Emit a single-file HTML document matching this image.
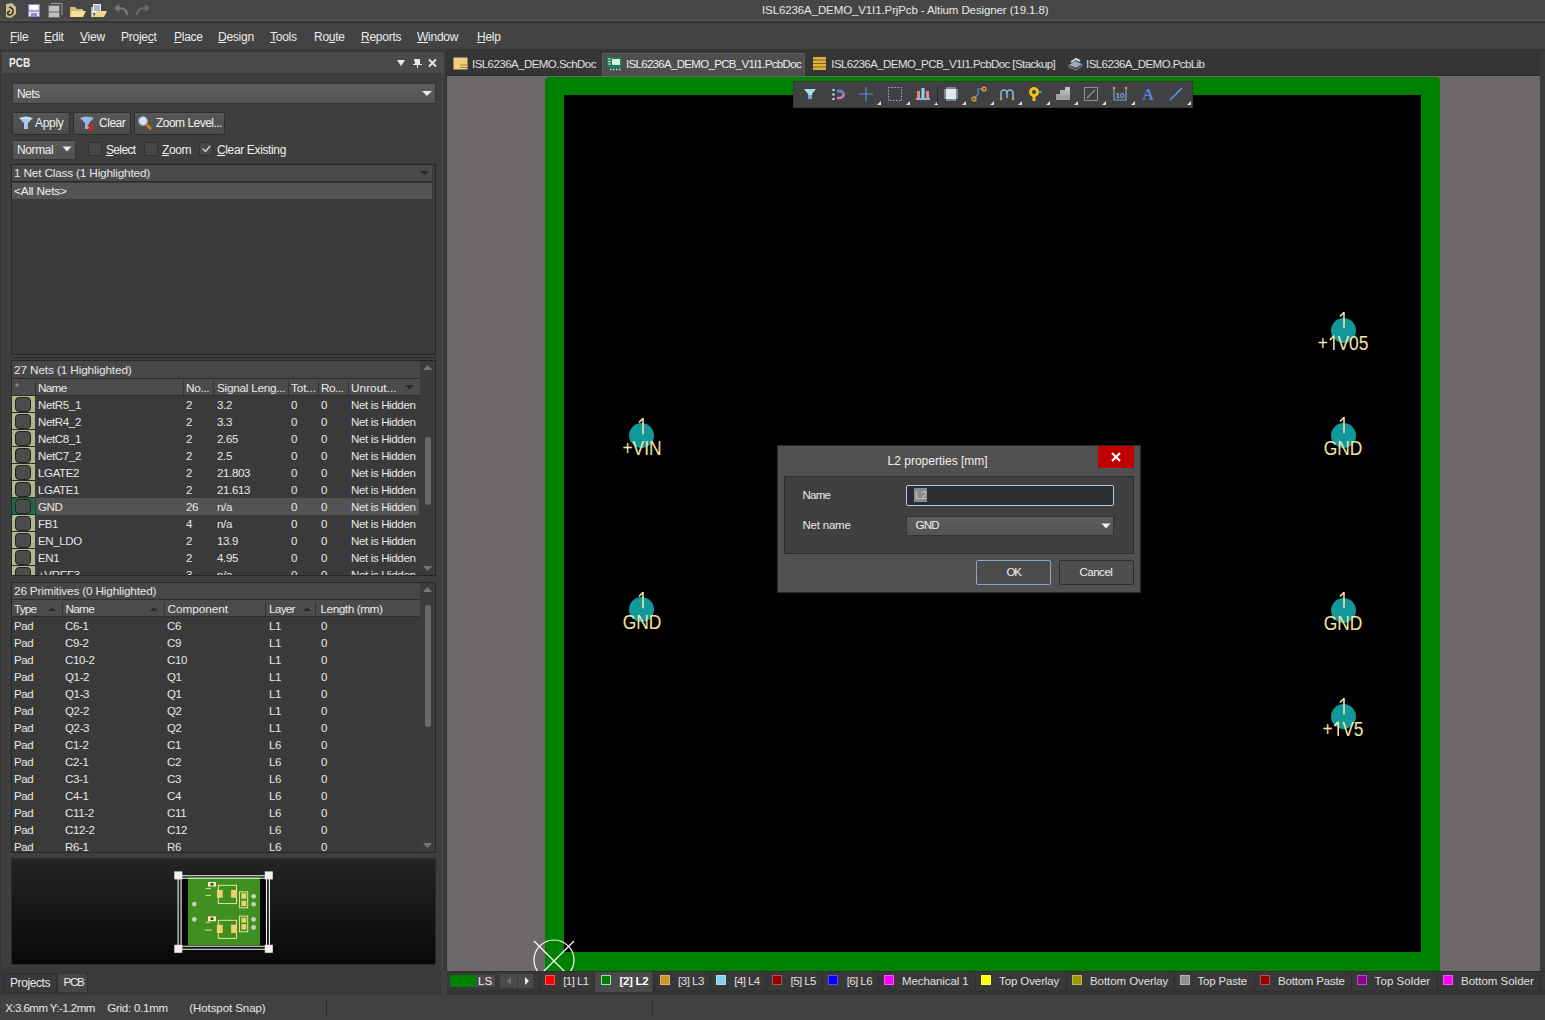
<!DOCTYPE html>
<html><head><meta charset="utf-8">
<style>
*{margin:0;padding:0;box-sizing:border-box}
html,body{width:1545px;height:1020px;overflow:hidden;background:#404040;font-family:"Liberation Sans",sans-serif;font-size:11.5px;color:#e6e6e6;position:relative}
.a{position:absolute}
.t{position:absolute;white-space:nowrap;line-height:1}
#title{left:0;top:0;width:1545px;height:23px;background:linear-gradient(#464646 0 19px,#4e4e4e 19px 21px,#383838 21px 22px,#333 22px 23px)}
#menu{left:0;top:23px;width:1545px;height:28px;background:linear-gradient(#434343 0 26px,#363636 26px 28px)}
#menu .t{top:8px;font-size:12px;color:#ececec;letter-spacing:-0.25px}
u{text-decoration:underline;text-underline-offset:1px;text-decoration-thickness:1px}
#lp{left:0;top:51px;width:447px;height:942px;background:#404040;overflow:hidden}
.hdr{background:#4a4a4a}
.lb{background:#3d3d3d;border:1px solid #262626}
.grp{background:#474747}
.colh{background:#4b4b4b}
.sep{background:#2c2c2c}
#tabs{left:447px;top:51px;width:1098px;height:25px;background:#353535}
#canvas{left:447px;top:76px;width:1093px;height:895px;background:#6d6969;overflow:hidden}
#layers{left:447px;top:971px;width:1098px;height:22px;background:#363636}
#status{left:0;top:993px;width:1545px;height:27px;background:#434343}
.pad{position:absolute;width:25px;height:25px;border-radius:50%;background:#12989a}
.ptxt{position:absolute;color:#f4e4a6;font-size:19px;line-height:1;white-space:nowrap}
.btn{position:absolute;background:linear-gradient(#565656,#4c4c4c);border:1px solid #2e2e2e;border-radius:2px}
.cb{position:absolute;width:14px;height:14px;background:#474747;border:1px solid #303030;border-radius:2px}
.cell{position:absolute;white-space:nowrap;line-height:1;font-size:11.5px;color:#e8e8e8;letter-spacing:-0.35px}
</style></head><body>
<div id="title" class="a">
  <div class="t" style="left:762px;top:5px;font-size:11.5px;color:#e8e8e8;letter-spacing:-0.11px">ISL6236A_DEMO_V1I1.PrjPcb - Altium Designer (19.1.8)</div>
</div>
<svg class="a" style="left:0;top:0" width="160" height="21" viewBox="0 0 160 21">
  <path d="M6 4 L12 3 L16 7 L16 14 L11 18 L6 17 Z" fill="#c8c090"/>
  <path d="M9 7 Q13 8 13 11 Q13 15 9 15 Q7 14 8 12 L10 11" stroke="#3a3420" stroke-width="1.6" fill="none"/>
  <rect x="28.5" y="4.5" width="11" height="12" fill="#e8e8f8" stroke="#8888c8" stroke-width="1"/>
  <rect x="30" y="5" width="8" height="4.5" fill="#ffffff"/>
  <path d="M29 11 H39" stroke="#6060a0" stroke-width="1"/>
  <rect x="31" y="13" width="6" height="3" fill="#9090c0"/>
  <rect x="48.5" y="5.5" width="11" height="12" fill="#c0c0c0" stroke="#707070" stroke-width="1"/>
  <path d="M51 3.5 H62 V15" stroke="#a0a0a0" stroke-width="1" fill="none"/>
  <path d="M49 12 H59" stroke="#606060" stroke-width="1"/>
  <path d="M70 7 L75 7 L77 9 L83 9 L83 17 L70 17 Z" fill="#d8b870"/>
  <path d="M72 11 L86 11 L83 17 L70 17 Z" fill="#f8e0a0"/>
  <rect x="93" y="4" width="8" height="9" fill="#e8eef8"/>
  <path d="M94 6 H100 M94 8 H100 M94 10 H100" stroke="#506080" stroke-width="0.8"/>
  <path d="M92 7 L92 17 L104 17 L107 11 L96 11 L94 17" fill="#f0d890"/>
  <path d="M92 7 L92 17" stroke="#f0f0f0" stroke-width="1.2"/>
  <path d="M127 15 Q127 8 119 8 L116 8 M119 5 L115.5 8 L119 11" stroke="#7a7a7a" stroke-width="2" fill="none"/>
  <path d="M137 15 Q137 8 145 8 L148 8 M145 5 L148.5 8 L145 11" stroke="#6a6a6a" stroke-width="2" fill="none"/>
</svg>
<div id="menu" class="a">
  <div class="t" style="left:10px"><u>F</u>ile</div>
  <div class="t" style="left:44px"><u>E</u>dit</div>
  <div class="t" style="left:80px"><u>V</u>iew</div>
  <div class="t" style="left:121px">Proje<u>c</u>t</div>
  <div class="t" style="left:174px"><u>P</u>lace</div>
  <div class="t" style="left:218px"><u>D</u>esign</div>
  <div class="t" style="left:270px"><u>T</u>ools</div>
  <div class="t" style="left:314px">Ro<u>u</u>te</div>
  <div class="t" style="left:361px"><u>R</u>eports</div>
  <div class="t" style="left:417px"><u>W</u>indow</div>
  <div class="t" style="left:477px"><u>H</u>elp</div>
</div>
<div class="a" style="left:0px;top:51px;width:441px;height:942px;background:#3e3e3e"></div>
<div class="a" style="left:0px;top:51px;width:1px;height:942px;background:#353535"></div>
<div class="a" style="left:441px;top:51px;width:6px;height:920px;background:linear-gradient(90deg,#464646 0 2px,#3c3c3c 2px 5px,#2e2e2e 5px 6px)"></div>
<div class="a" style="left:0px;top:49px;width:447px;height:3px;background:#393939"></div>
<div class="a" style="left:2px;top:52px;width:442px;height:21px;background:#4a4a4a"></div>
<div id="x1" class="t" style="left:8.5px;top:57px;font-weight:bold;font-size:12.5px;color:#f0f0f0;transform:scaleX(0.8);transform-origin:0 0;">PCB</div>
<svg class="a" style="left:394px;top:57px" width="45" height="12" viewBox="0 0 45 12"><path d="M3 3 L11 3 L7 9 Z" fill="#e8e8e8"/><path d="M20 2 h6 v5 h2 v1 h-4 v3 h-1 v-3 h-4 v-1 h2 z" fill="#e8e8e8"/><path d="M35 2.5 L42 9.5 M42 2.5 L35 9.5" stroke="#e8e8e8" stroke-width="1.8"/></svg>
<div class="a" style="left:12px;top:83px;width:424px;height:21px;background:linear-gradient(#5e5e5e,#545454);border:1px solid #333;border-radius:1px"></div>
<div id="x2" class="t" style="left:17px;top:88px;font-size:12px;color:#f0f0f0;letter-spacing:-0.57px;">Nets</div>
<svg class="a" style="left:421px;top:90px" width="12" height="7"><path d="M1 1 L11 1 L6 6 Z" fill="#e8e8e8"/></svg>
<div class="btn" style="left:12px;top:112px;width:58px;height:23px"></div>
<div class="btn" style="left:73px;top:112px;width:58px;height:23px"></div>
<div class="btn" style="left:134px;top:112px;width:91px;height:23px"></div>
<svg class="a" style="left:18px;top:115px" width="16" height="16" viewBox="0 0 16 16"><path d="M1 3 Q8 0 15 3 L10 8 L10 14 L6 14 L6 8 Z" fill="#a8c8f0"/><path d="M3 3.5 Q8 2 13 3.5" stroke="#e8f0ff" stroke-width="1" fill="none"/></svg>
<div id="x3" class="t" style="left:35px;top:117px;font-size:12px;color:#f0f0f0;letter-spacing:-0.31px;">Apply</div>
<svg class="a" style="left:79px;top:115px" width="16" height="16" viewBox="0 0 16 16"><path d="M1 3 Q8 0 15 3 L10 8 L10 14 L6 14 L6 8 Z" fill="#98b8e0"/><path d="M9 10 L14 15 M14 10 L9 15" stroke="#e02020" stroke-width="1.8"/></svg>
<div id="x4" class="t" style="left:99px;top:117px;font-size:12px;color:#f0f0f0;letter-spacing:-0.47px;">Clear</div>
<svg class="a" style="left:137px;top:115px" width="16" height="16" viewBox="0 0 16 16"><circle cx="6" cy="6" r="4.5" fill="#d0e0f0" stroke="#8090a0" stroke-width="1"/><path d="M9 9 L14 14" stroke="#d08030" stroke-width="2.5"/></svg>
<div id="x5" class="t" style="left:156px;top:117px;font-size:12px;color:#f0f0f0;letter-spacing:-0.52px;">Zoom Level...</div>
<div class="a" style="left:12px;top:140px;width:64px;height:20px;background:linear-gradient(#5a5a5a,#505050);border:1px solid #333;border-radius:1px"></div>
<div id="x6" class="t" style="left:17px;top:144px;font-size:12px;color:#f0f0f0;letter-spacing:-0.38px;">Normal</div>
<svg class="a" style="left:62px;top:146px" width="10" height="6"><path d="M0.5 0.5 L9.5 0.5 L5 5.5 Z" fill="#e8e8e8"/></svg>
<div class="cb" style="left:88px;top:142px"></div>
<div id="x7" class="t" style="left:106px;top:144px;font-size:12px;color:#f0f0f0;letter-spacing:-0.66px;"><u>S</u>elect</div>
<div class="cb" style="left:144px;top:142px"></div>
<div id="x8" class="t" style="left:162px;top:144px;font-size:12px;color:#f0f0f0;letter-spacing:-0.42px;"><u>Z</u>oom</div>
<div class="cb" style="left:199px;top:142px"></div>
<svg class="a" style="left:201px;top:144px" width="10" height="10"><path d="M1.5 4.5 L4.5 7.5 L9 2" stroke="#d8d8d8" stroke-width="1.2" fill="none"/></svg>
<div id="x9" class="t" style="left:217px;top:144px;font-size:12px;color:#f0f0f0;letter-spacing:-0.36px;"><u>C</u>lear Existing</div>
<div class="a" style="left:11px;top:164px;width:425px;height:191px;background:#3a3a3a;border:1px solid #262626"></div>
<div class="a" style="left:12px;top:165px;width:420px;height:17px;background:#4a4a4a;border-bottom:1px solid #2a2a2a"></div>
<div id="x10" class="t" style="left:14px;top:168px;font-size:11.8px;color:#e8e8e8;letter-spacing:-0.18px;">1 Net Class (1 Highlighted)</div>
<svg class="a" style="left:420px;top:171px" width="10" height="5"><path d="M0 0 L9 0 L4.5 4.5 Z" fill="#2a2a2a"/></svg>
<div class="a" style="left:12px;top:183px;width:420px;height:16px;background:#545454"></div>
<div id="x11" class="t" style="left:14px;top:186px;font-size:11.8px;color:#f0f0f0;letter-spacing:-0.17px;">&lt;All Nets&gt;</div>
<div class="a" style="left:11px;top:357px;width:425px;height:1px;background:#2e2e2e"></div>
<div class="a" style="left:11px;top:360px;width:425px;height:216px;background:#3a3a3a;border:1px solid #262626"></div>
<div class="a" style="left:12px;top:361px;width:408px;height:18px;background:#474747;border-bottom:1px solid #2c2c2c"></div>
<div id="x12" class="t" style="left:14px;top:365px;font-size:11.8px;color:#e8e8e8;letter-spacing:-0.13px;">27 Nets (1 Highlighted)</div>
<div class="a" style="left:12px;top:379px;width:408px;height:17px;background:#4b4b4b;border-bottom:1px solid #2e2e2e"></div>
<div class="a" style="left:35px;top:381px;width:1px;height:14px;background:#333"></div>
<div class="a" style="left:183px;top:381px;width:1px;height:14px;background:#333"></div>
<div class="a" style="left:213px;top:381px;width:1px;height:14px;background:#333"></div>
<div class="a" style="left:288px;top:381px;width:1px;height:14px;background:#333"></div>
<div class="a" style="left:318px;top:381px;width:1px;height:14px;background:#333"></div>
<div class="a" style="left:348px;top:381px;width:1px;height:14px;background:#333"></div>
<div id="x13" class="t" style="left:15px;top:383px;font-size:10px;color:#8aa0d0;">*</div>
<div id="x14" class="t" style="left:38px;top:383px;font-size:11.8px;color:#ececec;letter-spacing:-0.74px;">Name</div>
<div id="x15" class="t" style="left:186px;top:383px;font-size:11.8px;color:#ececec;letter-spacing:-0.32px;">No...</div>
<div id="x16" class="t" style="left:217px;top:383px;font-size:11.8px;color:#ececec;letter-spacing:-0.27px;">Signal Leng...</div>
<div id="x17" class="t" style="left:291px;top:383px;font-size:11.8px;color:#ececec;letter-spacing:-0.13px;">Tot...</div>
<div id="x18" class="t" style="left:321px;top:383px;font-size:11.8px;color:#ececec;letter-spacing:-0.48px;">Ro...</div>
<div id="x19" class="t" style="left:351px;top:383px;font-size:11.8px;color:#ececec;letter-spacing:0.03px;">Unrout...</div>
<svg class="a" style="left:405px;top:385px" width="10" height="5"><path d="M0 0 L9 0 L4.5 4.5 Z" fill="#2a2a2a"/></svg>
<div class="a" style="left:12px;top:396px;width:407px;height:179px;overflow:hidden">
<div class="a" style="left:0;top:0px;width:23px;height:17px;background:#b3b68a;border-bottom:1px solid #2a2a2a"></div>
<div class="a" style="left:3px;top:1px;width:16px;height:15px;background:#4c4c4c;border:1px solid #222;border-radius:4px"></div>
<div class="cell" style="left:26px;top:4px">NetR5_1</div>
<div class="cell" style="left:174px;top:4px">2</div>
<div class="cell" style="left:205px;top:4px">3.2</div>
<div class="cell" style="left:279px;top:4px">0</div>
<div class="cell" style="left:309px;top:4px">0</div>
<div class="cell" style="left:339px;top:4px">Net is Hidden</div>
<div class="a" style="left:0;top:17px;width:23px;height:17px;background:#b3b68a;border-bottom:1px solid #2a2a2a"></div>
<div class="a" style="left:3px;top:18px;width:16px;height:15px;background:#4c4c4c;border:1px solid #222;border-radius:4px"></div>
<div class="cell" style="left:26px;top:21px">NetR4_2</div>
<div class="cell" style="left:174px;top:21px">2</div>
<div class="cell" style="left:205px;top:21px">3.3</div>
<div class="cell" style="left:279px;top:21px">0</div>
<div class="cell" style="left:309px;top:21px">0</div>
<div class="cell" style="left:339px;top:21px">Net is Hidden</div>
<div class="a" style="left:0;top:34px;width:23px;height:17px;background:#b3b68a;border-bottom:1px solid #2a2a2a"></div>
<div class="a" style="left:3px;top:35px;width:16px;height:15px;background:#4c4c4c;border:1px solid #222;border-radius:4px"></div>
<div class="cell" style="left:26px;top:38px">NetC8_1</div>
<div class="cell" style="left:174px;top:38px">2</div>
<div class="cell" style="left:205px;top:38px">2.65</div>
<div class="cell" style="left:279px;top:38px">0</div>
<div class="cell" style="left:309px;top:38px">0</div>
<div class="cell" style="left:339px;top:38px">Net is Hidden</div>
<div class="a" style="left:0;top:51px;width:23px;height:17px;background:#b3b68a;border-bottom:1px solid #2a2a2a"></div>
<div class="a" style="left:3px;top:52px;width:16px;height:15px;background:#4c4c4c;border:1px solid #222;border-radius:4px"></div>
<div class="cell" style="left:26px;top:55px">NetC7_2</div>
<div class="cell" style="left:174px;top:55px">2</div>
<div class="cell" style="left:205px;top:55px">2.5</div>
<div class="cell" style="left:279px;top:55px">0</div>
<div class="cell" style="left:309px;top:55px">0</div>
<div class="cell" style="left:339px;top:55px">Net is Hidden</div>
<div class="a" style="left:0;top:68px;width:23px;height:17px;background:#b3b68a;border-bottom:1px solid #2a2a2a"></div>
<div class="a" style="left:3px;top:69px;width:16px;height:15px;background:#4c4c4c;border:1px solid #222;border-radius:4px"></div>
<div class="cell" style="left:26px;top:72px">LGATE2</div>
<div class="cell" style="left:174px;top:72px">2</div>
<div class="cell" style="left:205px;top:72px">21.803</div>
<div class="cell" style="left:279px;top:72px">0</div>
<div class="cell" style="left:309px;top:72px">0</div>
<div class="cell" style="left:339px;top:72px">Net is Hidden</div>
<div class="a" style="left:0;top:85px;width:23px;height:17px;background:#b3b68a;border-bottom:1px solid #2a2a2a"></div>
<div class="a" style="left:3px;top:86px;width:16px;height:15px;background:#4c4c4c;border:1px solid #222;border-radius:4px"></div>
<div class="cell" style="left:26px;top:89px">LGATE1</div>
<div class="cell" style="left:174px;top:89px">2</div>
<div class="cell" style="left:205px;top:89px">21.613</div>
<div class="cell" style="left:279px;top:89px">0</div>
<div class="cell" style="left:309px;top:89px">0</div>
<div class="cell" style="left:339px;top:89px">Net is Hidden</div>
<div class="a" style="left:24px;top:102px;width:384px;height:17px;background:#535353"></div>
<div class="a" style="left:0;top:102px;width:23px;height:17px;background:#1d6a48;border-bottom:1px solid #2a2a2a"></div>
<div class="a" style="left:3px;top:103px;width:16px;height:15px;background:#4c4c4c;border:1px solid #222;border-radius:4px"></div>
<div class="cell" style="left:26px;top:106px">GND</div>
<div class="cell" style="left:174px;top:106px">26</div>
<div class="cell" style="left:205px;top:106px">n/a</div>
<div class="cell" style="left:279px;top:106px">0</div>
<div class="cell" style="left:309px;top:106px">0</div>
<div class="cell" style="left:339px;top:106px">Net is Hidden</div>
<div class="a" style="left:0;top:119px;width:23px;height:17px;background:#b3b68a;border-bottom:1px solid #2a2a2a"></div>
<div class="a" style="left:3px;top:120px;width:16px;height:15px;background:#4c4c4c;border:1px solid #222;border-radius:4px"></div>
<div class="cell" style="left:26px;top:123px">FB1</div>
<div class="cell" style="left:174px;top:123px">4</div>
<div class="cell" style="left:205px;top:123px">n/a</div>
<div class="cell" style="left:279px;top:123px">0</div>
<div class="cell" style="left:309px;top:123px">0</div>
<div class="cell" style="left:339px;top:123px">Net is Hidden</div>
<div class="a" style="left:0;top:136px;width:23px;height:17px;background:#b3b68a;border-bottom:1px solid #2a2a2a"></div>
<div class="a" style="left:3px;top:137px;width:16px;height:15px;background:#4c4c4c;border:1px solid #222;border-radius:4px"></div>
<div class="cell" style="left:26px;top:140px">EN_LDO</div>
<div class="cell" style="left:174px;top:140px">2</div>
<div class="cell" style="left:205px;top:140px">13.9</div>
<div class="cell" style="left:279px;top:140px">0</div>
<div class="cell" style="left:309px;top:140px">0</div>
<div class="cell" style="left:339px;top:140px">Net is Hidden</div>
<div class="a" style="left:0;top:153px;width:23px;height:17px;background:#b3b68a;border-bottom:1px solid #2a2a2a"></div>
<div class="a" style="left:3px;top:154px;width:16px;height:15px;background:#4c4c4c;border:1px solid #222;border-radius:4px"></div>
<div class="cell" style="left:26px;top:157px">EN1</div>
<div class="cell" style="left:174px;top:157px">2</div>
<div class="cell" style="left:205px;top:157px">4.95</div>
<div class="cell" style="left:279px;top:157px">0</div>
<div class="cell" style="left:309px;top:157px">0</div>
<div class="cell" style="left:339px;top:157px">Net is Hidden</div>
<div class="a" style="left:0;top:170px;width:23px;height:17px;background:#b3b68a;border-bottom:1px solid #2a2a2a"></div>
<div class="a" style="left:3px;top:171px;width:16px;height:15px;background:#4c4c4c;border:1px solid #222;border-radius:4px"></div>
<div class="cell" style="left:26px;top:174px">+VREF3</div>
<div class="cell" style="left:174px;top:174px">3</div>
<div class="cell" style="left:205px;top:174px">n/a</div>
<div class="cell" style="left:279px;top:174px">0</div>
<div class="cell" style="left:309px;top:174px">0</div>
<div class="cell" style="left:339px;top:174px">Net is Hidden</div>
</div>
<div class="a" style="left:420px;top:361px;width:15px;height:214px;background:#3b3b3b"></div>
<svg class="a" style="left:423px;top:365px" width="9" height="5"><path d="M0 5 L9 5 L4.5 0 Z" fill="#777"/></svg>
<div class="a" style="left:425px;top:437px;width:6px;height:68px;background:#6a6a6a;border-radius:3px"></div>
<svg class="a" style="left:423px;top:566px" width="9" height="5"><path d="M0 0 L9 0 L4.5 5 Z" fill="#777"/></svg>
<div class="a" style="left:11px;top:582px;width:425px;height:271px;background:#3a3a3a;border:1px solid #262626"></div>
<div class="a" style="left:12px;top:583px;width:408px;height:17px;background:#474747;border-bottom:1px solid #2c2c2c"></div>
<div id="x20" class="t" style="left:14px;top:586px;font-size:11.8px;color:#e8e8e8;letter-spacing:-0.18px;">26 Primitives (0 Highlighted)</div>
<div class="a" style="left:12px;top:600px;width:408px;height:17px;background:#4b4b4b;border-bottom:1px solid #2e2e2e"></div>
<div class="a" style="left:62px;top:602px;width:1px;height:14px;background:#333"></div>
<div class="a" style="left:164px;top:602px;width:1px;height:14px;background:#333"></div>
<div class="a" style="left:265px;top:602px;width:1px;height:14px;background:#333"></div>
<div class="a" style="left:315px;top:602px;width:1px;height:14px;background:#333"></div>
<div id="x21" class="t" style="left:14px;top:604px;font-size:11.8px;color:#ececec;letter-spacing:-0.81px;">Type</div>
<div id="x22" class="t" style="left:65.5px;top:604px;font-size:11.8px;color:#ececec;letter-spacing:-0.74px;">Name</div>
<div id="x23" class="t" style="left:167.5px;top:604px;font-size:11.8px;color:#ececec;letter-spacing:-0.07px;">Component</div>
<div id="x24" class="t" style="left:269px;top:604px;font-size:11.8px;color:#ececec;letter-spacing:-0.74px;">Layer</div>
<div id="x25" class="t" style="left:320.4px;top:604px;font-size:11.8px;color:#ececec;letter-spacing:-0.44px;">Length (mm)</div>
<svg class="a" style="left:48px;top:607px" width="8" height="4"><path d="M0 4 L8 4 L4 0 Z" fill="#2a2a2a"/></svg>
<svg class="a" style="left:150px;top:607px" width="8" height="4"><path d="M0 4 L8 4 L4 0 Z" fill="#2a2a2a"/></svg>
<svg class="a" style="left:303px;top:607px" width="8" height="4"><path d="M0 4 L8 4 L4 0 Z" fill="#2a2a2a"/></svg>
<div class="a" style="left:12px;top:617px;width:408px;height:235px;overflow:hidden">
<div class="cell" style="left:2px;top:4px">Pad</div>
<div class="cell" style="left:53px;top:4px">C6-1</div>
<div class="cell" style="left:155px;top:4px">C6</div>
<div class="cell" style="left:257px;top:4px">L1</div>
<div class="cell" style="left:309px;top:4px">0</div>
<div class="cell" style="left:2px;top:21px">Pad</div>
<div class="cell" style="left:53px;top:21px">C9-2</div>
<div class="cell" style="left:155px;top:21px">C9</div>
<div class="cell" style="left:257px;top:21px">L1</div>
<div class="cell" style="left:309px;top:21px">0</div>
<div class="cell" style="left:2px;top:38px">Pad</div>
<div class="cell" style="left:53px;top:38px">C10-2</div>
<div class="cell" style="left:155px;top:38px">C10</div>
<div class="cell" style="left:257px;top:38px">L1</div>
<div class="cell" style="left:309px;top:38px">0</div>
<div class="cell" style="left:2px;top:55px">Pad</div>
<div class="cell" style="left:53px;top:55px">Q1-2</div>
<div class="cell" style="left:155px;top:55px">Q1</div>
<div class="cell" style="left:257px;top:55px">L1</div>
<div class="cell" style="left:309px;top:55px">0</div>
<div class="cell" style="left:2px;top:72px">Pad</div>
<div class="cell" style="left:53px;top:72px">Q1-3</div>
<div class="cell" style="left:155px;top:72px">Q1</div>
<div class="cell" style="left:257px;top:72px">L1</div>
<div class="cell" style="left:309px;top:72px">0</div>
<div class="cell" style="left:2px;top:89px">Pad</div>
<div class="cell" style="left:53px;top:89px">Q2-2</div>
<div class="cell" style="left:155px;top:89px">Q2</div>
<div class="cell" style="left:257px;top:89px">L1</div>
<div class="cell" style="left:309px;top:89px">0</div>
<div class="cell" style="left:2px;top:106px">Pad</div>
<div class="cell" style="left:53px;top:106px">Q2-3</div>
<div class="cell" style="left:155px;top:106px">Q2</div>
<div class="cell" style="left:257px;top:106px">L1</div>
<div class="cell" style="left:309px;top:106px">0</div>
<div class="cell" style="left:2px;top:123px">Pad</div>
<div class="cell" style="left:53px;top:123px">C1-2</div>
<div class="cell" style="left:155px;top:123px">C1</div>
<div class="cell" style="left:257px;top:123px">L6</div>
<div class="cell" style="left:309px;top:123px">0</div>
<div class="cell" style="left:2px;top:140px">Pad</div>
<div class="cell" style="left:53px;top:140px">C2-1</div>
<div class="cell" style="left:155px;top:140px">C2</div>
<div class="cell" style="left:257px;top:140px">L6</div>
<div class="cell" style="left:309px;top:140px">0</div>
<div class="cell" style="left:2px;top:157px">Pad</div>
<div class="cell" style="left:53px;top:157px">C3-1</div>
<div class="cell" style="left:155px;top:157px">C3</div>
<div class="cell" style="left:257px;top:157px">L6</div>
<div class="cell" style="left:309px;top:157px">0</div>
<div class="cell" style="left:2px;top:174px">Pad</div>
<div class="cell" style="left:53px;top:174px">C4-1</div>
<div class="cell" style="left:155px;top:174px">C4</div>
<div class="cell" style="left:257px;top:174px">L6</div>
<div class="cell" style="left:309px;top:174px">0</div>
<div class="cell" style="left:2px;top:191px">Pad</div>
<div class="cell" style="left:53px;top:191px">C11-2</div>
<div class="cell" style="left:155px;top:191px">C11</div>
<div class="cell" style="left:257px;top:191px">L6</div>
<div class="cell" style="left:309px;top:191px">0</div>
<div class="cell" style="left:2px;top:208px">Pad</div>
<div class="cell" style="left:53px;top:208px">C12-2</div>
<div class="cell" style="left:155px;top:208px">C12</div>
<div class="cell" style="left:257px;top:208px">L6</div>
<div class="cell" style="left:309px;top:208px">0</div>
<div class="cell" style="left:2px;top:225px">Pad</div>
<div class="cell" style="left:53px;top:225px">R6-1</div>
<div class="cell" style="left:155px;top:225px">R6</div>
<div class="cell" style="left:257px;top:225px">L6</div>
<div class="cell" style="left:309px;top:225px">0</div>
</div>
<div class="a" style="left:420px;top:583px;width:15px;height:269px;background:#3b3b3b"></div>
<svg class="a" style="left:423px;top:587px" width="9" height="5"><path d="M0 5 L9 5 L4.5 0 Z" fill="#777"/></svg>
<div class="a" style="left:425px;top:605px;width:6px;height:122px;background:#6a6a6a;border-radius:3px"></div>
<svg class="a" style="left:423px;top:843px" width="9" height="5"><path d="M0 0 L9 0 L4.5 5 Z" fill="#777"/></svg>
<div class="a" style="left:11px;top:858px;width:425px;height:107px;background:linear-gradient(#242424,#080808);border:1px solid #2a2a2a"></div>
<svg class="a" style="left:170px;top:868px" width="110" height="90" viewBox="0 0 110 90">
<rect x="11" y="10" width="86" height="68" fill="#050505"/>
<rect x="18" y="9.3" width="72" height="68" fill="#3f9020"/>
<g stroke="#f4f4f4" stroke-width="1.1"><path d="M8.1 7 V81 M11.1 7 V81 M96.5 7 V81 M99.4 7 V81 M8 7.7 H99.5 M8 10.2 H99.5 M8 78.3 H99.5 M8 81.2 H99.5"/></g>
<g fill="#f2f2f2"><rect x="4.3" y="3.4" width="8" height="8"/><rect x="94.8" y="3.4" width="8" height="8"/><rect x="4.3" y="76.8" width="8" height="8"/><rect x="94.8" y="76.8" width="8" height="8"/></g>
<g fill="none" stroke="#f4f0a8" stroke-width="0.9"><rect x="48.3" y="17.3" width="18.2" height="18.3"/><rect x="48.3" y="52.3" width="18.2" height="18.1"/><rect x="69.4" y="23.9" width="8.3" height="15.9"/><rect x="69.4" y="48.1" width="8.3" height="15.7"/></g>
<g fill="#f4eec0"><rect x="38" y="14" width="8" height="4.5"/><rect x="38" y="48.4" width="8" height="4.9"/></g>
<g fill="#604020"><rect x="40.5" y="15" width="3" height="2.5"/><rect x="40.5" y="49.5" width="3" height="2.5"/></g>
<g stroke="#e8f0b0" stroke-width="0.9"><path d="M35.6 20.4 H41 M35.6 27.3 H41 M36 54.3 H40 M35 62.1 H42"/></g>
<g fill="#f0d070"><rect x="46.9" y="21.9" width="5.8" height="7.8"/><rect x="61.1" y="21.9" width="5.9" height="7.8"/><rect x="46.9" y="56.7" width="5.8" height="8.3"/><rect x="61.1" y="56.7" width="5.9" height="8.3"/><rect x="71.4" y="25.3" width="4.9" height="5.4"/><rect x="71.4" y="32.7" width="4.9" height="5.4"/><rect x="71.4" y="49.8" width="4.9" height="4.9"/><rect x="71.4" y="56.2" width="4.9" height="5.4"/></g>
<g fill="#c8ccc0"><circle cx="24.3" cy="36.1" r="2.4"/><circle cx="24.3" cy="51.3" r="2.4"/><circle cx="83.6" cy="28.3" r="2.4"/><circle cx="83.6" cy="36.3" r="2.4"/><circle cx="83.6" cy="51.3" r="2.4"/><circle cx="83.6" cy="59.5" r="2.4"/></g>
</svg>
<div class="a" style="left:0px;top:966px;width:441px;height:29px;background:#3a3a3a"></div>
<div class="a" style="left:3px;top:973px;width:54px;height:20px;background:#383838;border:1px solid #2e2e2e"></div>
<div id="x26" class="t" style="left:10px;top:977px;font-size:12px;color:#e8e8e8;letter-spacing:-0.42px;">Projects</div>
<div class="a" style="left:57px;top:973px;width:31px;height:20px;background:#464646;border:1px solid #303030"></div>
<div id="x27" class="t" style="left:63.5px;top:977px;font-size:11.5px;color:#f0f0f0;letter-spacing:-1.22px;">PCB</div>
<div class="a" style="left:447px;top:51px;width:1098px;height:25px;background:linear-gradient(#353535 0 24px,#2e2e2e 24px 25px)"></div>
<div class="a" style="left:1540px;top:51px;width:5px;height:942px;background:#3a3a3a"></div>
<svg class="a" style="left:453px;top:57px" width="15" height="13" viewBox="0 0 15 13"><rect x="0.5" y="0.5" width="14" height="12" fill="#f0d080"/><path d="M7 8 h7 M7 10.5 h7" stroke="#a08040" stroke-width="1"/></svg>
<div id="x28" class="t" style="left:472px;top:59px;font-size:11.5px;color:#e0e0e0;letter-spacing:-0.55px;">ISL6236A_DEMO.SchDoc</div>
<div class="a" style="left:602px;top:53px;width:203px;height:23px;background:#4e4e4e;border:1px solid #5c5c5c;border-bottom:none"></div>
<svg class="a" style="left:607px;top:57px" width="15" height="14" viewBox="0 0 15 14"><rect x="0" y="0" width="15" height="11" fill="#1a7a5a"/><rect x="5" y="2" width="8" height="6" fill="#d8f0e0"/><path d="M1 2 h3 M1 4.5 h3 M1 7 h3" stroke="#d8f0e0" stroke-width="1"/><path d="M3 12.5 h1.5 M6 12.5 h1.5 M9 12.5 h1.5 M12 12.5 h1.5" stroke="#c8e8d8" stroke-width="1.5"/></svg>
<div id="x29" class="t" style="left:626px;top:59px;font-size:11.5px;color:#f0f0f0;letter-spacing:-0.69px;">ISL6236A_DEMO_PCB_V1I1.PcbDoc</div>
<svg class="a" style="left:813px;top:57px" width="13" height="13" viewBox="0 0 13 13"><rect x="0" y="0" width="13" height="13" fill="#e0b040"/><path d="M0 3 h13 M0 6.5 h13 M0 10 h13" stroke="#806020" stroke-width="1"/></svg>
<div id="x30" class="t" style="left:831.3px;top:59px;font-size:11.5px;color:#e0e0e0;letter-spacing:-0.57px;">ISL6236A_DEMO_PCB_V1I1.PcbDoc [Stackup]</div>
<svg class="a" style="left:1068px;top:56px" width="15" height="15" viewBox="0 0 15 15"><path d="M1 9 L7 5 L14 8 L8 12 Z" fill="#a0a8b8"/><path d="M3 6 L8 3 L12 5" stroke="#c8d0e0" stroke-width="2" fill="none"/><path d="M1 9 L1 11 L8 14 L14 10 L14 8" stroke="#8890a0" fill="none"/></svg>
<div id="x31" class="t" style="left:1086px;top:59px;font-size:11.5px;color:#e0e0e0;letter-spacing:-0.57px;">ISL6236A_DEMO.PcbLib</div>
<div class="a" style="left:447px;top:76px;width:1093px;height:895px;background:#6d6969;overflow:hidden">
<div class="a" style="left:97.5px;top:1px;width:895px;height:900px;background:#008000;border-radius:4px"></div>
<div class="a" style="left:117px;top:19px;width:857px;height:857px;background:#000"></div>
</div>
<div class="pad" style="left:629.0px;top:423.0px"></div>
<svg class="a" style="left:635.5px;top:416.5px" width="12" height="19" viewBox="0 0 12 19"><path d="M7 1 V17.3 M7 1.2 L3 5.5" stroke="#f4e4a6" stroke-width="1.6" fill="none"/></svg>
<div class="ptxt" style="left:591.5px;top:438.0px;width:100px;text-align:center;font-size:20px;transform:scaleX(0.87)">+VIN</div>
<div class="pad" style="left:629.0px;top:597.0px"></div>
<svg class="a" style="left:635.5px;top:590.5px" width="12" height="19" viewBox="0 0 12 19"><path d="M7 1 V17.3 M7 1.2 L3 5.5" stroke="#f4e4a6" stroke-width="1.6" fill="none"/></svg>
<div class="ptxt" style="left:591.5px;top:612.0px;width:100px;text-align:center;font-size:20px;transform:scaleX(0.87)">GND</div>
<div class="pad" style="left:1330.5px;top:317.5px"></div>
<svg class="a" style="left:1337px;top:311px" width="12" height="19" viewBox="0 0 12 19"><path d="M7 1 V17.3 M7 1.2 L3 5.5" stroke="#f4e4a6" stroke-width="1.6" fill="none"/></svg>
<div class="ptxt" style="left:1293px;top:332.5px;width:100px;text-align:center;font-size:20px;transform:scaleX(0.87)">+<svg width="11" height="15" viewBox="0 0 11 15" style="vertical-align:baseline"><path d="M6.5 0.6 V15 M6.5 0.8 L2 5" stroke="#f4e4a6" stroke-width="1.8" fill="none"/></svg>V05</div>
<div class="pad" style="left:1330.5px;top:422.5px"></div>
<svg class="a" style="left:1337px;top:416px" width="12" height="19" viewBox="0 0 12 19"><path d="M7 1 V17.3 M7 1.2 L3 5.5" stroke="#f4e4a6" stroke-width="1.6" fill="none"/></svg>
<div class="ptxt" style="left:1293px;top:437.5px;width:100px;text-align:center;font-size:20px;transform:scaleX(0.87)">GND</div>
<div class="pad" style="left:1330.5px;top:597.5px"></div>
<svg class="a" style="left:1337px;top:591px" width="12" height="19" viewBox="0 0 12 19"><path d="M7 1 V17.3 M7 1.2 L3 5.5" stroke="#f4e4a6" stroke-width="1.6" fill="none"/></svg>
<div class="ptxt" style="left:1293px;top:612.5px;width:100px;text-align:center;font-size:20px;transform:scaleX(0.87)">GND</div>
<div class="pad" style="left:1330.5px;top:703.5px"></div>
<svg class="a" style="left:1337px;top:697px" width="12" height="19" viewBox="0 0 12 19"><path d="M7 1 V17.3 M7 1.2 L3 5.5" stroke="#f4e4a6" stroke-width="1.6" fill="none"/></svg>
<div class="ptxt" style="left:1293px;top:718.5px;width:100px;text-align:center;font-size:20px;transform:scaleX(0.87)">+<svg width="11" height="15" viewBox="0 0 11 15" style="vertical-align:baseline"><path d="M6.5 0.6 V15 M6.5 0.8 L2 5" stroke="#f4e4a6" stroke-width="1.8" fill="none"/></svg>V5</div>
<svg class="a" style="left:520px;top:926px;overflow:visible" width="70" height="45" viewBox="0 0 70 45"><g stroke="#ffffff" stroke-width="1.2" fill="none"><circle cx="34" cy="34" r="20"/><path d="M14 15 L45 46 M54 15 L23 46"/></g></svg>
<div class="a" style="left:793px;top:81px;width:400px;height:27px;background:#414043;border:1px solid #38363a"></div>
<svg class="a" style="left:802px;top:86px" width="16" height="16" viewBox="0 0 16 16"><path d="M2 3 L14 3 L10 8 L10 13 L6 13 L6 8 Z" fill="#a8e0e0"/><path d="M6 9 L10 9 L10 13 L6 13 Z" fill="#80a0c8"/></svg>
<svg class="a" style="left:830px;top:86px" width="16" height="16" viewBox="0 0 16 16"><path d="M7 5 h3 a3.5 3.5 0 0 1 0 7 h-3" stroke="#d080b0" stroke-width="2.5" fill="none"/><path d="M7 5 h3 a3.5 3.5 0 0 1 3.5 3.5" stroke="#7080d0" stroke-width="2.5" fill="none"/><circle cx="3.5" cy="4" r="1.2" fill="#c0e0f0"/><circle cx="3.5" cy="8.5" r="1.2" fill="#c0e0f0"/><circle cx="3.5" cy="13" r="1.2" fill="#c0e0f0"/></svg>
<svg class="a" style="left:858px;top:86px" width="16" height="16" viewBox="0 0 16 16"><path d="M8 1 V15 M1 8 H15" stroke="#6090d0" stroke-width="1.2"/></svg>
<svg class="a" style="left:877px;top:101px" width="4" height="4"><path d="M4 0 L4 4 L0 4 Z" fill="#e0e0e0"/></svg>
<svg class="a" style="left:887px;top:86px" width="16" height="16" viewBox="0 0 16 16"><rect x="1.5" y="1.5" width="13" height="13" fill="none" stroke="#b0a8d0" stroke-width="1" stroke-dasharray="1.5 1.5"/></svg>
<svg class="a" style="left:906px;top:101px" width="4" height="4"><path d="M4 0 L4 4 L0 4 Z" fill="#e0e0e0"/></svg>
<svg class="a" style="left:915px;top:86px" width="16" height="16" viewBox="0 0 16 16"><rect x="2" y="5" width="3" height="7" fill="#f08090"/><rect x="6.5" y="2" width="3" height="10" fill="#90d8e8"/><rect x="11" y="5" width="3" height="7" fill="#f08090"/><path d="M1 13 H15" stroke="#b8e0f8" stroke-width="1.5"/><path d="M1 15 H15" stroke="#404080" stroke-width="1"/></svg>
<svg class="a" style="left:934px;top:101px" width="4" height="4"><path d="M4 0 L4 4 L0 4 Z" fill="#e0e0e0"/></svg>
<svg class="a" style="left:943px;top:86px" width="16" height="16" viewBox="0 0 16 16"><rect x="3" y="3" width="10" height="10" fill="#e0e8f0"/><path d="M4 1 v2 M6 1 v2 M8 1 v2 M10 1 v2 M12 1 v2 M4 13 v2 M6 13 v2 M8 13 v2 M10 13 v2 M12 13 v2 M1 4 h2 M1 6 h2 M1 8 h2 M1 10 h2 M1 12 h2 M13 4 h2 M13 6 h2 M13 8 h2 M13 10 h2 M13 12 h2" stroke="#c0c8d8" stroke-width="1"/></svg>
<svg class="a" style="left:962px;top:101px" width="4" height="4"><path d="M4 0 L4 4 L0 4 Z" fill="#e0e0e0"/></svg>
<svg class="a" style="left:971px;top:86px" width="16" height="16" viewBox="0 0 16 16"><path d="M3 13 L7 8 L7 3 L13 3" stroke="#6090d0" stroke-width="1.2" fill="none"/><circle cx="3" cy="13" r="2" fill="none" stroke="#e0a030" stroke-width="1.3"/><circle cx="13" cy="3" r="2" fill="none" stroke="#e0a030" stroke-width="1.3"/></svg>
<svg class="a" style="left:990px;top:101px" width="4" height="4"><path d="M4 0 L4 4 L0 4 Z" fill="#e0e0e0"/></svg>
<svg class="a" style="left:999px;top:86px" width="16" height="16" viewBox="0 0 16 16"><path d="M2 12 V7 a3 3 0 0 1 6 0 V12 M8 7 a3 3 0 0 1 6 0 V12" stroke="#90b0d8" stroke-width="1.6" fill="none"/><circle cx="2" cy="13" r="1.3" fill="#d0a030"/><circle cx="14" cy="13" r="1.3" fill="#d0a030"/></svg>
<svg class="a" style="left:1018px;top:101px" width="4" height="4"><path d="M4 0 L4 4 L0 4 Z" fill="#e0e0e0"/></svg>
<svg class="a" style="left:1027px;top:86px" width="16" height="16" viewBox="0 0 16 16"><circle cx="7" cy="6" r="5" fill="#f0c020"/><circle cx="7" cy="6" r="2" fill="#3c3c3c"/><rect x="5.5" y="10" width="3" height="5" fill="#f0c020"/><path d="M12 6 h3" stroke="#40c040" stroke-width="1.5"/></svg>
<svg class="a" style="left:1046px;top:101px" width="4" height="4"><path d="M4 0 L4 4 L0 4 Z" fill="#e0e0e0"/></svg>
<svg class="a" style="left:1055px;top:86px" width="16" height="16" viewBox="0 0 16 16"><rect x="1" y="8" width="14" height="6" fill="#a0a0a0"/><rect x="5" y="4" width="10" height="5" fill="#b0b0b0"/><rect x="10" y="1" width="5" height="4" fill="#c0c0c0"/></svg>
<svg class="a" style="left:1074px;top:101px" width="4" height="4"><path d="M4 0 L4 4 L0 4 Z" fill="#e0e0e0"/></svg>
<svg class="a" style="left:1083px;top:86px" width="16" height="16" viewBox="0 0 16 16"><rect x="1.5" y="1.5" width="13" height="13" fill="none" stroke="#909090" stroke-width="1"/><path d="M4 12 L12 4" stroke="#909090" stroke-width="1.2"/></svg>
<svg class="a" style="left:1102px;top:101px" width="4" height="4"><path d="M4 0 L4 4 L0 4 Z" fill="#e0e0e0"/></svg>
<svg class="a" style="left:1112px;top:86px" width="16" height="16" viewBox="0 0 16 16"><path d="M2 2 V14 H14 V2" stroke="#70a0e0" stroke-width="1.2" fill="none"/><text x="8" y="12" font-size="8" fill="#c0d0e8" text-anchor="middle" font-family="Liberation Sans">10</text><circle cx="2" cy="2" r="1.3" fill="#d0a030"/><circle cx="14" cy="2" r="1.3" fill="#d0a030"/></svg>
<svg class="a" style="left:1131px;top:101px" width="4" height="4"><path d="M4 0 L4 4 L0 4 Z" fill="#e0e0e0"/></svg>
<svg class="a" style="left:1140px;top:86px" width="16" height="16" viewBox="0 0 16 16"><text x="8" y="14" font-size="16" fill="#5088e0" text-anchor="middle" font-family="Liberation Serif" font-weight="bold">A</text></svg>
<svg class="a" style="left:1168px;top:86px" width="16" height="16" viewBox="0 0 16 16"><path d="M2 14 L14 2" stroke="#6090e0" stroke-width="1.6"/></svg>
<svg class="a" style="left:1187px;top:101px" width="4" height="4"><path d="M4 0 L4 4 L0 4 Z" fill="#e0e0e0"/></svg>
<div class="a" style="left:937px;top:86px;width:1px;height:18px;background:#2e2e2e"></div>
<div class="a" style="left:447px;top:971px;width:1098px;height:24px;background:linear-gradient(#2e2e2e 0 1px,#383838 1px 19px,#333 19px 24px)"></div>
<div class="a" style="left:450px;top:975px;width:26px;height:12px;background:#008000"></div>
<div class="a" style="left:476px;top:975px;width:19px;height:12px;background:#4a4a4a"></div>
<div id="x32" class="t" style="left:478px;top:976px;font-size:11.5px;color:#f0f0f0;">LS</div>
<div class="a" style="left:500px;top:974px;width:33px;height:14px;background:#4a4a4a"></div>
<div class="a" style="left:517px;top:974px;width:1px;height:14px;background:#3a3a3a"></div>
<svg class="a" style="left:503px;top:976px" width="30" height="10"><path d="M8 1 L4 5 L8 9 Z" fill="#707070"/><path d="M22 1 L26 5 L22 9 Z" fill="#f0f0f0"/></svg>
<div class="a" style="left:539px;top:971px;width:1px;height:22px;background:#2c2c2c"></div>
<div class="a" style="left:545px;top:975px;width:10px;height:10px;background:#ff0000;border:1px solid #ffffff50"></div>
<div id="x33" class="t" style="left:563.2px;top:976px;font-size:11.5px;color:#e0e0e0;letter-spacing:-0.56px;">[1] L1</div>
<div class="a" style="left:594px;top:974px;width:1px;height:16px;background:#2c2c2c"></div>
<div class="a" style="left:595px;top:972px;width:57px;height:20px;background:#4a4a4a"></div>
<div class="a" style="left:601px;top:975px;width:10px;height:10px;background:#008000;border:1px solid #a0e0a0"></div>
<div id="x34" class="t" style="left:619.4px;top:976px;font-size:11.5px;color:#ffffff;font-weight:bold;letter-spacing:-0.28px;">[2] L2</div>
<div class="a" style="left:654px;top:974px;width:1px;height:16px;background:#2c2c2c"></div>
<div class="a" style="left:660px;top:975px;width:10px;height:10px;background:#c89820;border:1px solid #ffffff50"></div>
<div id="x35" class="t" style="left:678.1px;top:976px;font-size:11.5px;color:#e0e0e0;letter-spacing:-0.50px;">[3] L3</div>
<div class="a" style="left:710px;top:974px;width:1px;height:16px;background:#2c2c2c"></div>
<div class="a" style="left:716px;top:975px;width:10px;height:10px;background:#80d0f0;border:1px solid #ffffff50"></div>
<div id="x36" class="t" style="left:734.3px;top:976px;font-size:11.5px;color:#e0e0e0;letter-spacing:-0.56px;">[4] L4</div>
<div class="a" style="left:766px;top:974px;width:1px;height:16px;background:#2c2c2c"></div>
<div class="a" style="left:772px;top:975px;width:10px;height:10px;background:#900000;border:1px solid #ffffff50"></div>
<div id="x37" class="t" style="left:790.5px;top:976px;font-size:11.5px;color:#e0e0e0;letter-spacing:-0.56px;">[5] L5</div>
<div class="a" style="left:822px;top:974px;width:1px;height:16px;background:#2c2c2c"></div>
<div class="a" style="left:828px;top:975px;width:10px;height:10px;background:#0000ff;border:1px solid #ffffff50"></div>
<div id="x38" class="t" style="left:846.7px;top:976px;font-size:11.5px;color:#e0e0e0;letter-spacing:-0.58px;">[6] L6</div>
<div class="a" style="left:878px;top:974px;width:1px;height:16px;background:#2c2c2c"></div>
<div class="a" style="left:884px;top:975px;width:10px;height:10px;background:#ff00ff;border:1px solid #ffffff50"></div>
<div id="x39" class="t" style="left:902.1px;top:976px;font-size:11.5px;color:#e0e0e0;letter-spacing:-0.11px;">Mechanical 1</div>
<div class="a" style="left:975px;top:974px;width:1px;height:16px;background:#2c2c2c"></div>
<div class="a" style="left:981px;top:975px;width:10px;height:10px;background:#ffff00;border:1px solid #ffffff50"></div>
<div id="x40" class="t" style="left:999px;top:976px;font-size:11.5px;color:#e0e0e0;letter-spacing:-0.10px;">Top Overlay</div>
<div class="a" style="left:1066px;top:974px;width:1px;height:16px;background:#2c2c2c"></div>
<div class="a" style="left:1072px;top:975px;width:10px;height:10px;background:#999900;border:1px solid #ffffff50"></div>
<div id="x41" class="t" style="left:1090px;top:976px;font-size:11.5px;color:#e0e0e0;letter-spacing:-0.07px;">Bottom Overlay</div>
<div class="a" style="left:1174px;top:974px;width:1px;height:16px;background:#2c2c2c"></div>
<div class="a" style="left:1180px;top:975px;width:10px;height:10px;background:#909090;border:1px solid #ffffff50"></div>
<div id="x42" class="t" style="left:1197.5px;top:976px;font-size:11.5px;color:#e0e0e0;letter-spacing:-0.19px;">Top Paste</div>
<div class="a" style="left:1254px;top:974px;width:1px;height:16px;background:#2c2c2c"></div>
<div class="a" style="left:1260px;top:975px;width:10px;height:10px;background:#900000;border:1px solid #ffffff50"></div>
<div id="x43" class="t" style="left:1278px;top:976px;font-size:11.5px;color:#e0e0e0;letter-spacing:-0.20px;">Bottom Paste</div>
<div class="a" style="left:1351px;top:974px;width:1px;height:16px;background:#2c2c2c"></div>
<div class="a" style="left:1357px;top:975px;width:10px;height:10px;background:#900090;border:1px solid #ffffff50"></div>
<div id="x44" class="t" style="left:1374.6px;top:976px;font-size:11.5px;color:#e0e0e0;letter-spacing:0.07px;">Top Solder</div>
<div class="a" style="left:1437px;top:974px;width:1px;height:16px;background:#2c2c2c"></div>
<div class="a" style="left:1443px;top:975px;width:10px;height:10px;background:#ff00ff;border:1px solid #ffffff50"></div>
<div id="x45" class="t" style="left:1461px;top:976px;font-size:11.5px;color:#e0e0e0;letter-spacing:-0.01px;">Bottom Solder</div>
<div class="a" style="left:1540px;top:974px;width:1px;height:16px;background:#2c2c2c"></div>
<div class="a" style="left:0px;top:995px;width:1545px;height:25px;background:#414141"></div>
<div id="x46" class="t" style="left:5.2px;top:1003px;font-size:11.5px;color:#e8e8e8;letter-spacing:-0.54px;">X:3.6mm Y:-1.2mm</div>
<div id="x47" class="t" style="left:107.2px;top:1003px;font-size:11.5px;color:#e8e8e8;letter-spacing:-0.23px;">Grid: 0.1mm</div>
<div id="x48" class="t" style="left:189.3px;top:1003px;font-size:11.5px;color:#e8e8e8;letter-spacing:-0.08px;">(Hotspot Snap)</div>
<div class="a" style="left:326px;top:1000px;width:1px;height:17px;background:#2e2e2e"></div>
<div class="a" style="left:652px;top:1000px;width:1px;height:17px;background:#2e2e2e"></div>
<div class="a" style="left:777px;top:445px;width:364px;height:148px;background:#505050;border:1px solid #2a2a2a"></div>
<div id="x49" class="t" style="left:887.6px;top:455px;font-size:12px;color:#f0f0f0;letter-spacing:0.00px;">L2 properties [mm]</div>
<div class="a" style="left:1098px;top:446px;width:36px;height:22px;background:#c00000"></div>
<svg class="a" style="left:1110px;top:451px" width="12" height="12"><path d="M2 2 L10 10 M10 2 L2 10" stroke="#fff" stroke-width="2.2"/></svg>
<div class="a" style="left:784px;top:476px;width:350px;height:78px;background:#404040;border:1px solid #2c2c2c"></div>
<div id="x50" class="t" style="left:802.5px;top:490px;font-size:11.5px;color:#e8e8e8;letter-spacing:-0.72px;">Name</div>
<div id="x51" class="t" style="left:802.5px;top:520px;font-size:11.5px;color:#e8e8e8;letter-spacing:-0.21px;">Net name</div>
<div class="a" style="left:906px;top:485px;width:208px;height:21px;background:#2b2d30;border:1px solid #b8cce0;border-radius:2px"></div>
<div class="a" style="left:914px;top:488px;width:13px;height:14px;background:#8a8a8a"></div>
<div id="x52" class="t" style="left:915px;top:490px;font-size:11px;color:#c8c8c8;">L2</div>
<div class="a" style="left:906px;top:516px;width:208px;height:20px;background:linear-gradient(#5c5c5c,#545454);border:1px solid #333"></div>
<div id="x53" class="t" style="left:915.6px;top:520px;font-size:11.5px;color:#f0f0f0;letter-spacing:-0.85px;">GND</div>
<svg class="a" style="left:1101px;top:523px" width="10" height="6"><path d="M0.5 0.5 L9.5 0.5 L5 5.5 Z" fill="#f0f0f0"/></svg>
<div class="a" style="left:976px;top:560px;width:75px;height:25px;background:#4c4c4c;border:1px solid #8ca6c2;border-radius:2px"></div>
<div id="x54" class="t" style="left:1006.6px;top:567px;font-size:11.5px;color:#f0f0f0;letter-spacing:-1.17px;">OK</div>
<div class="a" style="left:1059px;top:560px;width:75px;height:25px;background:#4e4e4e;border:1px solid #2c2c2c;border-radius:2px"></div>
<div id="x55" class="t" style="left:1079.4px;top:567px;font-size:11.5px;color:#f0f0f0;letter-spacing:-0.46px;">Cancel</div>
</body></html>
